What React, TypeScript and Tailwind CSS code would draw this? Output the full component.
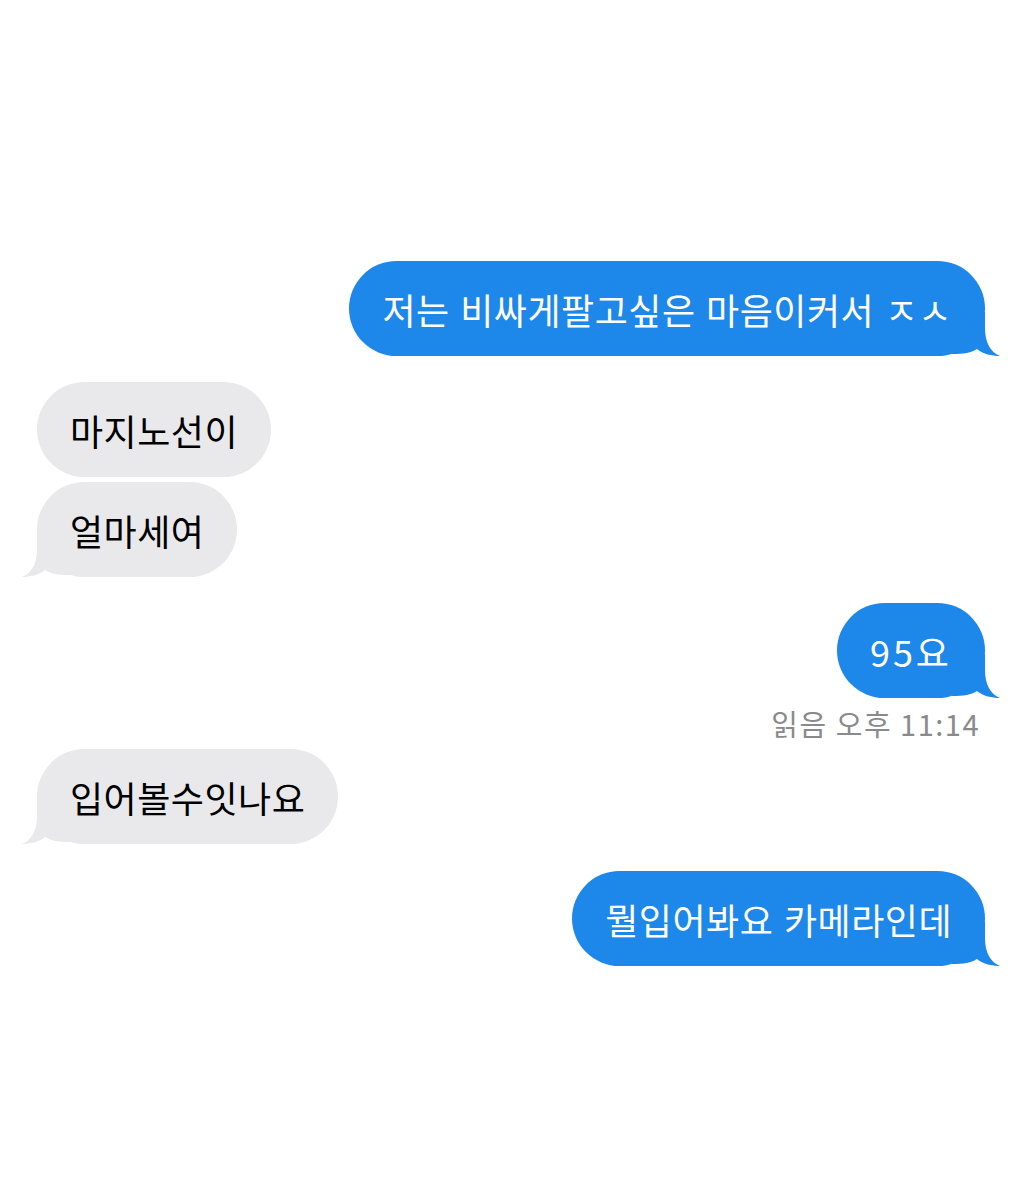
import React from 'react';

type Side = 'me' | 'them';

function Tail({ side }: { side: Side }) {
  const fill = side === 'me' ? '#1d87ea' : '#e9e9eb';
  return (
    <svg
      width="48"
      height="44"
      viewBox="0 0 48 44"
      className={
        side === 'me'
          ? 'absolute -right-[15px] bottom-0'
          : 'absolute -left-[15px] bottom-0 -scale-x-100'
      }
    >
      <path d="M0 0 L33 0 L33 16 C33 30 38 40 48 44 C40 44 31 42 25 37 C19 41 12 42 0 42 Z" fill={fill} />
    </svg>
  );
}

function Bubble({
  side,
  text,
  tail = true,
  className = '',
  textClass = '',
}: {
  side: Side;
  text: string;
  tail?: boolean;
  className?: string;
  textClass?: string;
}) {
  const me = side === 'me';
  return (
    <div className={`flex ${me ? 'justify-end' : 'justify-start'} ${className}`}>
      <div
        className={`relative flex h-[95px] items-center rounded-[48px] px-[33px] text-[36px] leading-none tracking-[0.5px] [word-spacing:2px] ${
          me ? 'bg-[#1d87ea] text-white' : 'bg-[#e9e9eb] text-black'
        }`}
      >
        <span className={`relative z-10 whitespace-nowrap ${textClass}`}>{text}</span>
        {tail && <Tail side={side} />}
      </div>
    </div>
  );
}

export default function App() {
  return (
    <div
      className="min-h-[1185px] w-full bg-white pl-[37px] pr-[39px] pt-[261px]"
      style={{ fontFamily: '"Noto Sans CJK KR", "Noto Sans", sans-serif' }}
    >
      <Bubble side="me" text="저는 비싸게팔고싶은 마음이커서 ㅈㅅ" />
      <Bubble side="them" text="마지노선이" tail={false} className="mt-[26px]" />
      <Bubble side="them" text="얼마세여" className="mt-[5px]" />
      <Bubble side="me" text="95요" className="mt-[26px]" textClass="tracking-[3px]" />
      <div className="mt-[8px] flex justify-end pr-[5px] text-[29px] leading-[34px] tracking-[1.5px] text-[#8a8a8e]">
        읽음 오후 11:14
      </div>
      <Bubble side="them" text="입어볼수잇나요" className="mt-[9px]" />
      <Bubble side="me" text="뭘입어봐요 카메라인데" className="mt-[27px]" />
    </div>
  );
}
